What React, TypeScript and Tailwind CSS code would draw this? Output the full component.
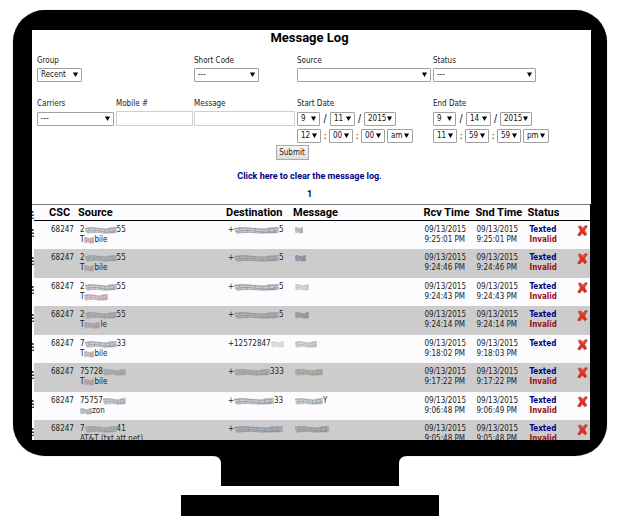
import React from "react";

type Redacted = { head: string; tail: string; width: number; color?: string };
type LogRow = {
  phone: Redacted;
  carrier: Redacted;
  destination: Redacted;
  message: Redacted;
  received: string;
  sent: string;
  invalid: boolean;
};

const gray = "#8c9296";
const rose = "#a08a90";

const rows: LogRow[] = [
  { phone: { head: "2", tail: "55", width: 32 }, carrier: { head: "T", tail: "bile", width: 10, color: "#b5808a" }, destination: { head: "+", tail: "5", width: 45 }, message: { head: "", tail: "", width: 8, color: rose }, received: "9:25:01 PM", sent: "9:25:01 PM", invalid: true },
  { phone: { head: "2", tail: "55", width: 32 }, carrier: { head: "T", tail: "bile", width: 10, color: rose }, destination: { head: "+", tail: "5", width: 45 }, message: { head: "", tail: "", width: 11, color: "#77718a" }, received: "9:24:46 PM", sent: "9:24:46 PM", invalid: true },
  { phone: { head: "2", tail: "55", width: 32 }, carrier: { head: "T", tail: "", width: 24, color: "#b08a95" }, destination: { head: "+", tail: "5", width: 45 }, message: { head: "", tail: "", width: 14, color: "#c3aeb2" }, received: "9:24:43 PM", sent: "9:24:43 PM", invalid: true },
  { phone: { head: "2", tail: "55", width: 32 }, carrier: { head: "T", tail: "le", width: 16, color: rose }, destination: { head: "+", tail: "5", width: 45 }, message: { head: "", tail: "", width: 14, color: "#85797b" }, received: "9:24:14 PM", sent: "9:24:14 PM", invalid: true },
  { phone: { head: "7", tail: "33", width: 32 }, carrier: { head: "T", tail: "bile", width: 10, color: rose }, destination: { head: "+12572847", tail: "", width: 13, color: "#c4c8c8" }, message: { head: "", tail: "", width: 22, color: "#aaa4aa" }, received: "9:18:02 PM", sent: "9:18:03 PM", invalid: false },
  { phone: { head: "75728", tail: "", width: 23 }, carrier: { head: "T", tail: "bile", width: 10, color: rose }, destination: { head: "+", tail: "333", width: 36 }, message: { head: "", tail: "", width: 28, color: "#929083" }, received: "9:17:22 PM", sent: "9:17:22 PM", invalid: true },
  { phone: { head: "75757", tail: "", width: 23 }, carrier: { head: "", tail: "zon", width: 12 }, destination: { head: "+", tail: "33", width: 40 }, message: { head: "", tail: "Y", width: 28, color: "#8d989c" }, received: "9:06:48 PM", sent: "9:06:49 PM", invalid: true },
  { phone: { head: "7", tail: "41", width: 32 }, carrier: { head: "AT&T (txt.att.net)", tail: "", width: 0 }, destination: { head: "+", tail: "", width: 49, color: "#87919b" }, message: { head: "", tail: "", width: 34, color: "#898989" }, received: "9:05:48 PM", sent: "9:05:48 PM", invalid: true },
];

function Smudge({ width, color = gray }: { width: number; color?: string }) {
  return (
    <svg width={width} height="8" viewBox="0 0 40 9" preserveAspectRatio="none" className="shrink-0 blur-[0.5px]" aria-hidden="true">
      <path d="M0 2 Q8 0 16 2 T32 1 L40 1 V8 Q30 9 21 7 T4 8 L1 7Z" fill={color} opacity="0.45" />
      <path d="M0 3 Q8 1 18 3 T39 2 M1 6 Q12 4 20 6 T39 5 M2 8 Q14 6 24 8 L38 7" fill="none" stroke={color} strokeWidth="0.8" />
      <path d="M5 2V5M12 4V8M19 2V5M25 4V8M31 2V6M36 3V8" stroke={color} strokeWidth="1" opacity="0.7" />
    </svg>
  );
}

function Obscured({ value }: { value: Redacted }) {
  return (
    <span className="flex h-[10px] items-center whitespace-nowrap">
      {value.head}
      {value.width > 0 && <Smudge width={value.width} color={value.color} />}
      {value.tail}
    </span>
  );
}

function EdgeMark({ color = "#2b3a48" }: { color?: string }) {
  return (
    <svg viewBox="0 0 2 8" className="mt-1 block h-2 w-[2px]" aria-hidden="true">
      <path d="M0 0H1.5V2H0ZM0 3.5H2V5H0ZM.5 6.5H2V8H0Z" fill={color} />
    </svg>
  );
}

function Select({ id, label, value, className }: { id?: string; label?: string; value: string; className: string }) {
  return (
    <span className={`relative block h-[14px] ${className}`}>
      <select
        id={id}
        aria-label={label}
        defaultValue={value}
        className="block h-[14px] w-full appearance-none rounded-[1px] border border-[#a0a0a0] bg-white p-0 pl-[3px] text-[8px] leading-3 text-[#111]"
      >
        <option>{value}</option>
      </select>
      <svg viewBox="0 0 5 5" className="pointer-events-none absolute top-1 right-1 size-[5px]" aria-hidden="true">
        <path d="M0 0.5H5L2.5 5Z" fill="#000" />
      </svg>
    </span>
  );
}

function Field({ id, label, className = "", children }: { id: string; label: string; className?: string; children: React.ReactNode }) {
  return (
    <div className={className}>
      <label htmlFor={id} className="mb-px block leading-3">{label}</label>
      {children}
    </div>
  );
}

function DateField({ id, label, day, time }: { id: string; label: string; day: string[]; time: string[] }) {
  return (
    <Field id={id} label={label}>
      <div className="flex pt-px text-[10px] leading-[14px] text-black">
        <Select id={id} value={day[0]} className="w-[23px]" />
        <span className="w-[10px] text-center">/</span>
        <Select label={`${label} day`} value={day[1]} className="w-[25px]" />
        <span className="w-[9px] text-center">/</span>
        <Select label={`${label} year`} value={day[2]} className="w-[32px]" />
      </div>
      <div className="mt-[3px] flex text-[10px] leading-[14px]">
        <Select label={`${label} hour`} value={time[0]} className="w-[24px]" />
        <span className="w-2 text-center">:</span>
        <Select label={`${label} minute`} value={time[1]} className="w-[24px]" />
        <span className="w-2 text-center">:</span>
        <Select label={`${label} second`} value={time[2]} className="w-[24px]" />
        <Select label={`${label} half of day`} value={time[3]} className="ml-[2px] w-[26px]" />
      </div>
    </Field>
  );
}

function DeleteIcon() {
  return (
    <svg viewBox="0 0 11 12" className="h-3 w-[11px]" aria-hidden="true">
      <path d="M1.2 1.4L3.8 .9L5.7 3.2L8.2 .6L10.4 1.1L7.6 5.6L9.8 9.4L7.7 10.8L5.3 8.1L2.9 11L.6 10.2L3.4 5.8Z" fill="#dc3020" stroke="#b5241a" strokeWidth="0.5" strokeLinejoin="round" />
      <path d="M2 2L3.4 1.8L5.7 4.4L8.6 1.6" fill="none" stroke="#f1705d" strokeWidth="0.8" />
    </svg>
  );
}

function SearchForm() {
  return (
    <form className="mt-[9px] ml-[5px] w-[510px] text-[8px] text-[#222]" onSubmit={(e) => e.preventDefault()}>
      <div className="grid grid-cols-[79px_78px_103px_136px_1fr] gap-y-4">
        <Field id="group" label="Group" className="col-span-2">
          <Select id="group" value="Recent" className="w-[45px]" />
        </Field>
        <Field id="code" label="Short Code">
          <Select id="code" value="---" className="w-[65px]" />
        </Field>
        <Field id="source" label="Source">
          <Select id="source" value="" className="w-[134px]" />
        </Field>
        <Field id="status" label="Status">
          <Select id="status" value="---" className="w-[103px]" />
        </Field>
        <Field id="carriers" label="Carriers">
          <div className="pt-px">
            <Select id="carriers" value="---" className="w-[77px]" />
          </div>
        </Field>
        <Field id="mobile" label="Mobile #">
          <input id="mobile" className="block h-[15px] w-[77px] border border-[#cfcfcf] px-[2px]" />
        </Field>
        <Field id="message" label="Message">
          <input id="message" className="block h-[15px] w-[101px] border border-[#cfcfcf] px-[2px]" />
        </Field>
        <DateField id="start" label="Start Date" day={["9", "11", "2015"]} time={["12", "00", "00", "am"]} />
        <DateField id="end" label="End Date" day={["9", "14", "2015"]} time={["11", "59", "59", "pm"]} />
      </div>
      <button className="mx-auto mt-[2px] block h-[15px] w-[33px] border border-[#a9a9a9] bg-linear-to-b from-[#f6f6f6] to-[#dedede] leading-3">
        Submit
      </button>
    </form>
  );
}

function LogTable() {
  return (
    <table className="w-full table-fixed border-collapse border-t border-r border-t-[#777] border-r-black text-[8px] leading-[10px] text-[#222]">
      <colgroup>
        <col className="w-[2px]" />
        <col className="w-[44px]" />
        <col className="w-[148px]" />
        <col className="w-[67px]" />
        <col />
        <col className="w-[52px]" />
        <col className="w-[52px]" />
        <col className="w-[46px]" />
        <col className="w-[17px]" />
      </colgroup>
      <thead>
        <tr className="h-4 bg-[#fcfcfe] text-left font-['Roboto',sans-serif] text-[11px] leading-[15px] whitespace-nowrap text-black *:border-b *:border-black *:p-0 *:font-bold">
          <th className="border-b-0!"><EdgeMark color="#1f5c86" /></th>
          <th className="pl-[15px]!">CSC</th>
          <th>Source</th>
          <th>Destination</th>
          <th>Message</th>
          <th>Rcv Time</th>
          <th>Snd Time</th>
          <th>Status</th>
          <th></th>
        </tr>
      </thead>
      <tbody>
        {rows.map((row, i) => (
          <tr key={i} className="h-7 bg-[#fcfcfe] align-top whitespace-nowrap even:h-[29px] even:bg-[#ccc] *:p-0 *:pt-1">
            <td className="bg-white"><EdgeMark /></td>
            <td className="pl-[17px]!">68247</td>
            <td className="pl-[2px]!">
              <Obscured value={row.phone} />
              <Obscured value={row.carrier} />
            </td>
            <td className="pl-[2px]!"><Obscured value={row.destination} /></td>
            <td className="pl-[2px]!"><Obscured value={row.message} /></td>
            <td className="pl-px!">09/13/2015<br />{row.received}</td>
            <td className="pl-px!">09/13/2015<br />{row.sent}</td>
            <td className="pl-[2px]! font-bold text-[#000080]">
              Texted
              {row.invalid && <><br /><span className="text-[#990f12]">Invalid</span></>}
            </td>
            <td className="pl-[3px]!">
              <button className="block" aria-label="Delete message"><DeleteIcon /></button>
            </td>
          </tr>
        ))}
      </tbody>
    </table>
  );
}

export default function App() {
  return (
    <main className="flex flex-col bg-white pt-[10px] font-['DejaVu_Sans_Condensed','DejaVu_Sans',sans-serif]">
      <section className="mr-3 ml-[13px] rounded-[32px] bg-black pt-5 pr-4 pb-4 pl-[19px] shadow-[0_0_1px_#777]">
        <div className="h-[410px] overflow-hidden bg-white">
          <h1 className="pr-1 text-center font-['Roboto',sans-serif] text-[13px] leading-4 font-bold text-black">Message Log</h1>
          <SearchForm />
          <nav className="flex flex-col items-center pt-[10px] pr-1 pb-1 font-['Roboto',sans-serif] text-[9px] leading-3 font-bold text-[#000080]">
            <a href="#clear">Click here to clear the message log.</a>
            <a href="#page-1" className="mt-[6px]">1</a>
          </nav>
          <LogTable />
        </div>
      </section>
      <div className="flex justify-center">
        <svg viewBox="0 0 8 8" className="size-2" aria-hidden="true"><path d="M0 0H8V8Q8 0 0 0Z" /></svg>
        <div className="h-[30px] w-[178px] bg-black" />
        <svg viewBox="0 0 8 8" className="size-2" aria-hidden="true"><path d="M8 0H0V8Q0 0 8 0Z" /></svg>
      </div>
      <div className="mx-auto mt-[9px] h-[21px] w-[258px] bg-black" />
    </main>
  );
}
